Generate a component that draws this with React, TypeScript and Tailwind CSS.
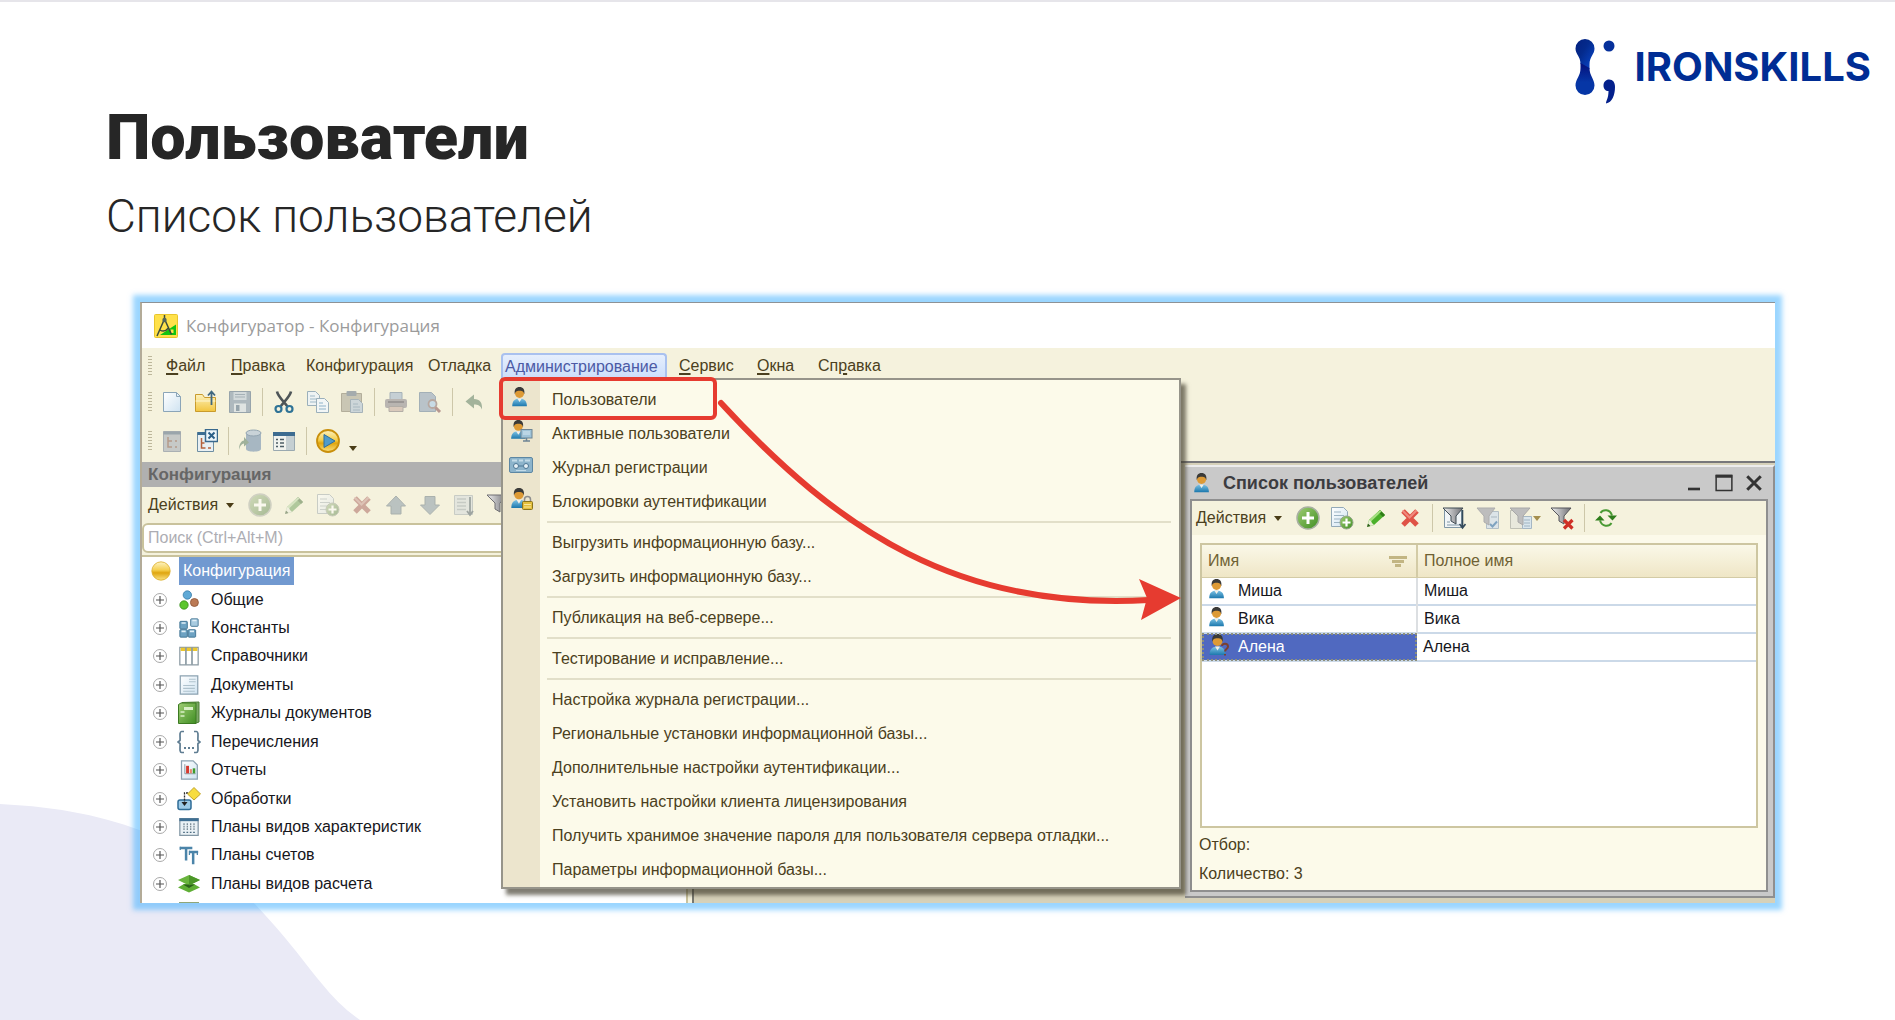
import React from 'react';

type Box = { children: React.ReactNode; size?: string; box?: string };

function Svg({ children, size = 'size-6', box = '0 0 24 24' }: Box) {
  return (
    <svg viewBox={box} className={`${size} shrink-0`} fill="none" aria-hidden="true">
      {children}
    </svg>
  );
}

function Gradients() {
  return (
    <svg className="absolute size-0" aria-hidden="true">
      <defs>
        <linearGradient id="gold" x1="0" y1="0" x2="0" y2="1">
          <stop offset="0" stopColor="#fdf3c4" />
          <stop offset="0.45" stopColor="#f5cf4d" />
          <stop offset="0.6" stopColor="#dfa50f" />
          <stop offset="1" stopColor="#fbe383" />
        </linearGradient>
        <linearGradient id="sheet" x1="0" y1="0" x2="1" y2="1">
          <stop offset="0" stopColor="#ffffff" />
          <stop offset="1" stopColor="#cfe3f1" />
        </linearGradient>
        <linearGradient id="folder" x1="0" y1="0" x2="0" y2="1">
          <stop offset="0" stopColor="#fdf2bd" />
          <stop offset="1" stopColor="#f2c53f" />
        </linearGradient>
        <linearGradient id="leaf" x1="0" y1="0" x2="1" y2="1">
          <stop offset="0" stopColor="#9fce74" />
          <stop offset="1" stopColor="#3f8d22" />
        </linearGradient>
        <linearGradient id="body" x1="0" y1="0" x2="0" y2="1">
          <stop offset="0" stopColor="#7fc4e6" />
          <stop offset="1" stopColor="#1c78ad" />
        </linearGradient>
        <linearGradient id="steel" x1="0" y1="0" x2="1" y2="0">
          <stop offset="0" stopColor="#f2f2f2" />
          <stop offset="1" stopColor="#6d6d72" />
        </linearGradient>
        <linearGradient id="logoTop" x1="0" y1="0" x2="1" y2="1">
          <stop offset="0" stopColor="#04207f" />
          <stop offset="0.4" stopColor="#042a8c" />
          <stop offset="1" stopColor="#0a49cf" />
        </linearGradient>
        <linearGradient id="logoBottom" x1="0" y1="0" x2="0" y2="1">
          <stop offset="0" stopColor="#05107a" />
          <stop offset="0.6" stopColor="#0636a6" />
          <stop offset="1" stopColor="#0636a6" />
        </linearGradient>
      </defs>
    </svg>
  );
}

/* ---------- icons ---------- */

function Person() {
  return (
    <>
      <path d="M3.500 22c0-5.500 2.500-8.500 8-8.500s8 3 8 8.500z" fill="url(#body)" />
      <path d="M9 13.500h5l-2.500 4z" fill="#f4efe6" />
      <circle cx="11.500" cy="8" r="5" fill="#dd9a35" />
      <path d="M6.300 9c-.8-5.500 1.500-8 5.200-8s6 2.500 5.200 8c-.6-2.400-1.400-3.800-5.200-3.800S6.900 6.600 6.300 9z" fill="#3a3a38" />
    </>
  );
}
const UserIcon = ({ size }: { size?: string }) => (
  <Svg size={size}>
    <Person />
  </Svg>
);
const UserUnknownIcon = () => (
  <Svg>
    <Person />
    <path d="M16 13c0-3 6-3 6 .5 0 2.500-3 2.500-3 5M19 21v1.500" stroke="#7a4032" strokeWidth="2" />
  </Svg>
);
const ActiveUserIcon = () => (
  <Svg>
    <g transform="translate(-1 0) scale(.9)">
      <Person />
    </g>
    <rect x="12" y="10.500" width="11" height="8.500" fill="#9fc3d8" stroke="#6d8494" />
    <path d="M14 13h7M14 15h7" stroke="#d7e8f2" />
    <path d="M17.500 19v2.500M14 22h7" stroke="#6d8494" strokeWidth="1.500" />
  </Svg>
);
const LockUserIcon = () => (
  <Svg>
    <g transform="translate(-1 0) scale(.95)">
      <Person />
    </g>
    <path d="M15.500 15v-2.500a3 3 0 0 1 6 0V15" stroke="#8d8d8d" strokeWidth="1.500" />
    <rect x="13.500" y="14.500" width="10" height="8" rx="1" fill="#e3bf3c" stroke="#8a741d" />
    <path d="M15 17.500h7M15 20h7" stroke="#f9e79a" />
  </Svg>
);
const CassetteIcon = () => (
  <Svg>
    <rect x="0.500" y="4.500" width="23" height="15" rx="1.500" fill="#8db4cb" stroke="#5d87a3" />
    <path d="M3 7.500h5M10 7.500h4M16 7.500h5" stroke="#c3dbe8" strokeWidth="2" />
    <circle cx="7" cy="13" r="2.500" fill="#e7f1f6" stroke="#4c7694" />
    <circle cx="17" cy="13" r="2.500" fill="#e7f1f6" stroke="#4c7694" />
    <path d="M10 13h4" stroke="#4c7694" />
    <path d="M7 17.500h10" stroke="#c3dbe8" />
  </Svg>
);
const AppIcon = () => (
  <Svg>
    <rect x="0.500" y="0.500" width="23" height="23" rx="1" fill="#ffe14a" stroke="#e8c52c" />
    <path d="M6 21 22 10.500V21z" fill="#12c312" />
    <path d="M16.500 15.500h3v3.500h-3z" fill="#ffe14a" />
    <path d="M10.500 5 3 22M10.500 5l7 15.500M6 16c3 2 6 1 8.500-2M10.500 1v5" stroke="#3c4b3c" strokeWidth="1.500" />
    <circle cx="10.500" cy="6" r="2.200" fill="#53645a" />
  </Svg>
);
const NewIcon = () => (
  <Svg>
    <path d="M3.500 2.500h13l4 4v15h-17z" fill="url(#sheet)" stroke="#8ba5b8" />
    <path d="M16.500 2.500v4h4" stroke="#8ba5b8" />
  </Svg>
);
const OpenIcon = () => (
  <Svg>
    <path d="M1.500 21.500v-17h7l2 3h11v14z" fill="url(#folder)" stroke="#c99b2c" />
    <path d="M1.500 11h20" stroke="#fdf6d2" />
    <path d="M17.500 15V2M14 5.500 17.500 1.500 21 5.500" stroke="#3f6780" strokeWidth="1.800" />
  </Svg>
);
const SaveIcon = () => (
  <Svg>
    <path d="M1.500 1.500h21v21h-21z" fill="#aeb9be" stroke="#97a4ab" />
    <path d="M5.500 2h13v8h-13z" fill="#d3dadb" />
    <path d="M7 4.500h10M7 7h10" stroke="#a5b1b6" />
    <path d="M6 13.500h12V22H6z" fill="#dfe4e2" />
    <path d="M8 15h3.500v6H8z" fill="#96a4ab" />
  </Svg>
);
const CutIcon = () => (
  <Svg>
    <path d="M5 1.500c1 5 6 9 10.500 15M19 1.500c-1 5-6 9-10.500 15" stroke="#4e5558" strokeWidth="2.600" />
    <circle cx="6.500" cy="19" r="3" stroke="#2f7396" strokeWidth="2.200" />
    <circle cx="17.500" cy="19" r="3" stroke="#2f7396" strokeWidth="2.200" />
  </Svg>
);
const CopyIcon = () => (
  <Svg>
    <path d="M1.500 1.500h8l4 4v10h-12z" fill="#eef3f3" stroke="#9bb0bb" />
    <path d="M4 6h5M4 9h7M4 12h7" stroke="#9fb9c8" />
    <path d="M10.500 8.500h8l4 4v10h-12z" fill="#f2f6f6" stroke="#9bb0bb" />
    <path d="M13 13h4M13 16h7M13 19h7" stroke="#8eb2c9" />
  </Svg>
);
const PasteIcon = () => (
  <Svg>
    <path d="M1.500 3.500h20v18h-20z" fill="#c9c6b4" stroke="#b3ae9b" />
    <rect x="6.500" y="1" width="10" height="5" rx="1" fill="#a4abad" />
    <path d="M10.500 9.500h8l4 4v9h-12z" fill="#cdd6d9" stroke="#a6b3b9" />
    <path d="M13 14h5M13 17h7M13 20h7" stroke="#a8b8c0" />
  </Svg>
);
const PrintIcon = () => (
  <Svg>
    <path d="M6 2.500h12V10H6z" fill="#c5cfd4" stroke="#a6b2b8" />
    <rect x="1" y="9" width="22" height="9" rx="2" fill="#b9b5b1" />
    <path d="M4 12h16" stroke="#9c9896" strokeWidth="2" />
    <path d="M5 16.500h14v5H5z" fill="#d9c9bb" stroke="#b3aea7" />
  </Svg>
);
const PreviewIcon = () => (
  <Svg>
    <path d="M1.500 2.500h12l4 4v15h-16z" fill="#b9c3c9" stroke="#a3b0b7" />
    <circle cx="14.500" cy="14" r="4" fill="#c8dbe5" stroke="#b7a8a0" strokeWidth="1.800" />
    <path d="m17.500 17.500 4.500 4.500" stroke="#b89890" strokeWidth="3" />
  </Svg>
);
const UndoIcon = () => (
  <Svg>
    <path d="M3.500 11.500 12 4.500v4.500c6 0 8.500 3.500 8 10.500-1.500-4-4-5-8-5v4z" fill="#a3b39b" />
  </Svg>
);
const TreeDocIcon = () => (
  <Svg>
    <path d="M3.500 2.500h17v20h-17z" fill="#c6c9c7" stroke="#aab0b3" />
    <path d="M3.500 2.500h17v3h-17z" fill="#9aa5ab" />
    <path d="M8 8v10h4M8 12h4M15 12h2M15 18h2" stroke="#b59b8a" strokeWidth="1.500" />
  </Svg>
);
const TreeCloseIcon = () => (
  <Svg>
    <path d="M3.500 3.500h16v19h-16z" fill="#e9f0f3" stroke="#6e8ea3" />
    <path d="M3.500 3h10v3h-10z" fill="#3c6d92" />
    <path d="M7.500 9v10h4M7.500 14h3M14 19h3" stroke="#b5613c" strokeWidth="1.500" />
    <path d="M11.500.500h12v12h-12z" fill="#eef6fa" stroke="#39698d" strokeWidth="1.500" />
    <path d="m14.500 3.500 6 6M20.500 3.500l-6 6" stroke="#2b5f87" strokeWidth="2" />
  </Svg>
);
const DatabaseIcon = () => (
  <Svg>
    <path d="M8 4v16c0 3.500 15 3.500 15 0V4z" fill="#a7b7c2" />
    <ellipse cx="15.500" cy="4" rx="7.500" ry="3" fill="#c9d3d8" stroke="#93a5b1" />
    <path d="M1 21c0-6 2-9 5-9.500V8l5 5.500-5 4v-3c-2 .5-4 2-5 6.500z" fill="#9fb19b" />
  </Svg>
);
const PropertiesIcon = () => (
  <Svg>
    <path d="M1.500 3.500h21v18h-21z" fill="#f1f3ef" stroke="#9aa9b0" />
    <path d="M1 3h22v4H1z" fill="#3d6c90" />
    <path d="M14 7h8v14h-8z" fill="#c5cfd2" />
    <path d="M4 10.500h2M4 14h2M4 17.500h2M8 10.500h4M8 14h4M8 17.500h4" stroke="#4c5d66" strokeWidth="1.500" />
  </Svg>
);
const PlayIcon = () => (
  <Svg>
    <circle cx="12" cy="12" r="11" fill="url(#gold)" stroke="#c98f0c" strokeWidth="1.800" />
    <path d="M8 5.500 19 12 8 18.500z" fill="#4e9bcb" stroke="#2e6e9b" />
  </Svg>
);
const AddIcon = () => (
  <Svg>
    <circle cx="12" cy="12" r="11" fill="url(#leaf)" stroke="#a9b0a3" strokeWidth="1.500" />
    <path d="M12 6v12M6 12h12" stroke="#fff" strokeWidth="3" />
  </Svg>
);
const PencilIcon = () => (
  <Svg>
    <path d="m3 21 2-7L16 4l5 5-11 10z" fill="#4bb02a" />
    <path d="m14 6 5 5 2-2-5-5z" fill="#2f7c17" />
    <path d="m5 14 11-10 1.500 1.500L7 15.500z" fill="#a6e082" />
    <path d="m3 21 2-7 2 1 1 2 2 2z" fill="#e9efd4" />
    <path d="m3 21 1-3.500 2.500 2.500z" fill="#2c5e18" />
  </Svg>
);
const AddDocIcon = () => (
  <Svg>
    <path d="M1.500 1.500h12l4 4v15h-16z" fill="url(#sheet)" stroke="#93a9b8" />
    <path d="M4 6h7M4 9.500h10M4 13h7M4 16.500h6" stroke="#9db4c4" />
    <circle cx="16.500" cy="16.500" r="6.500" fill="url(#leaf)" stroke="#93a58a" />
    <path d="M16.500 12.500v8M12.500 16.500h8" stroke="#fff" strokeWidth="2.200" />
  </Svg>
);
const DeleteIcon = () => (
  <Svg>
    <path d="m5 5 14 14M19 5 5 19" stroke="#df5347" strokeWidth="5" />
    <path d="m4.500 4.500 7 7 7-7" stroke="#f08a7e" strokeWidth="2" />
  </Svg>
);
const UpIcon = () => (
  <Svg>
    <path d="M12 3 21.500 13H17v8H7v-8H2.500z" fill="#6f96b8" stroke="#54748e" />
  </Svg>
);
const DownIcon = () => (
  <Svg>
    <path d="M12 21.500 21.500 12H17V3.500H7V12H2.500z" fill="#6f96b8" stroke="#54748e" />
  </Svg>
);
const SortListIcon = () => (
  <Svg>
    <path d="M2.500 2.500h18v19h-18z" fill="#cddbe4" stroke="#93a9b8" />
    <path d="M5 6h9M5 9.500h9M5 13h9M5 16.500h9" stroke="#8ea6b6" strokeWidth="1.500" />
    <path d="M18 4v17M15 18l3 4 3-4" stroke="#3b5c74" strokeWidth="1.800" />
  </Svg>
);
const Funnel = () => <path d="M1 2h20l-7 8v9l-5-3v-6z" fill="url(#steel)" stroke="#6e6e72" />;
const FunnelIcon = () => (
  <Svg>
    <Funnel />
  </Svg>
);
const FilterSortIcon = () => (
  <Svg>
    <path d="M2.500 3.500h17v18h-17z" fill="#f1f5f7" stroke="#8097a6" />
    <path d="M5 16h3M5 19h12" stroke="#8097a6" />
    <path d="M1 2h20l-7 8v8l-5-3v-5z" fill="url(#steel)" stroke="#3f4a52" />
    <path d="M20.500 4v17M17.500 18l3 4 3-4" stroke="#33495a" strokeWidth="1.600" />
  </Svg>
);
const FilterPickIcon = () => (
  <Svg>
    <path d="M10.500 5.500h12v17h-12z" fill="#dce4e8" stroke="#b3bfc6" />
    <path d="M15 11h6" stroke="#a9b7bf" />
    <path d="m14 18 2.500 2.500 4.500-5" stroke="#7fa3c0" strokeWidth="2" />
    <path d="M1 2h18l-6 8v9l-5-3v-6z" fill="#bdbdbd" stroke="#adadad" />
  </Svg>
);
const FilterListIcon = () => (
  <Svg>
    <path d="M1.500 4.500h12v18h-12z" fill="#e8e8dc" stroke="#bfc0b5" />
    <path d="M13.500 10.500h9v12h-9z" fill="#d9e5ec" stroke="#a5b7c4" />
    <path d="M15 14h6M15 17h6M15 20h6" stroke="#9fb4c2" />
    <path d="M1 2h20l-7 8v9l-5-3v-6z" fill="#bdbdbd" stroke="#a8a8a8" />
  </Svg>
);
const FilterOffIcon = () => (
  <Svg>
    <path d="M1 2h20l-7 8v8l-5-3v-5z" fill="url(#steel)" stroke="#55555a" />
    <path d="m14 14 8.500 8.500M22.500 14 14 22.500" stroke="#cf2f25" strokeWidth="3.200" />
  </Svg>
);
const RefreshIcon = () => (
  <Svg>
    <path d="M6.500 7C9 3 16 3 18 9.500M17.500 17C15 21 8 21 6 14.500" stroke="#4a9a34" strokeWidth="2" />
    <path d="m13.500 9.500h9.500l-4.500 5zM1 14.500h9.500L6 9.500z" fill="#2f7d1c" />
  </Svg>
);
const PlusIcon = () => (
  <Svg size="size-4" box="0 0 16 16">
    <circle cx="8" cy="8" r="6.500" stroke="#a9a9a9" />
    <path d="M8 4v8M4 8h8" stroke="#555" strokeWidth="1.200" />
  </Svg>
);
const BallIcon = () => (
  <Svg size="size-5">
    <circle cx="12" cy="12" r="11" fill="url(#gold)" stroke="#dcae2c" />
  </Svg>
);
const CommonIcon = () => (
  <Svg size="size-5">
    <circle cx="10" cy="6" r="5" fill="#5fa9d6" stroke="#3c7fab" />
    <circle cx="6" cy="18" r="5" fill="#5cc62f" stroke="#38901a" />
    <circle cx="18.500" cy="15" r="4.800" fill="#bb7a55" stroke="#8e5536" />
  </Svg>
);
const ConstIcon = () => (
  <Svg size="size-5">
    <g fill="#6da2c2" stroke="#356a8c">
      <rect x="1" y="4" width="9" height="9" rx="1" />
      <rect x="1" y="14" width="9" height="9" rx="1" />
      <rect x="11" y="14" width="9" height="9" rx="1" />
      <rect x="14" y="1" width="9" height="9" rx="1" fill="#a8cbe0" />
    </g>
    <path d="M3 6h5M3 16h5M13 16h5M16 3h5" stroke="#e0eff7" strokeWidth="2" />
  </Svg>
);
const CatalogIcon = () => (
  <Svg size="size-5">
    <path d="M1 1.500h22v21H1z" fill="#fff" stroke="#8b9aa3" strokeWidth="1.500" />
    <path d="M2 2h20v4H2z" fill="#ecc72f" />
    <path d="M8.300 1.500v21M15.600 1.500v21" stroke="#8b9aa3" strokeWidth="2" />
  </Svg>
);
const DocIcon = () => (
  <Svg size="size-5">
    <path d="M1.500 1h21v22h-21z" fill="url(#sheet)" stroke="#8ca2b1" strokeWidth="1.500" />
    <path d="M12 5h8M12 8h8M5 12.500h14M5 16h14M5 19.500h14" stroke="#afc2cd" strokeWidth="1.300" />
  </Svg>
);
const JournalIcon = () => (
  <Svg size="size-6">
    <path d="M5 1.500 22 1v20l-4 1.500z" fill="#7aa764" stroke="#4d7f37" />
    <path d="M1.500 3.500 4 2h15v20.500H1.500z" fill="url(#leaf)" stroke="#3c7a22" />
    <path d="M7 6h9v3H7z" fill="#d9efc8" />
    <path d="M3.500 11h4M3.500 15h4" stroke="#d9efc8" strokeWidth="1.500" />
  </Svg>
);
const EnumIcon = () => (
  <Svg size="size-6">
    <path d="M7 1.500H4.500C2 1.500 3.500 8 3 10.500L1 12l2 1.500c.5 2.500-1 9 1.500 9H7M17 1.500h2.500c2.500 0 1 6.500 1.500 9l2 1.500-2 1.500c-.5 2.500 1 9-1.500 9H17" stroke="#5f7d92" strokeWidth="1.700" />
    <path d="M7 18h2M11 18h2M15 18h2" stroke="#5f7d92" strokeWidth="2" />
  </Svg>
);
const ReportIcon = () => (
  <Svg size="size-5">
    <path d="M3 1h14l5 5v17H3z" fill="url(#sheet)" stroke="#8ca2b1" strokeWidth="1.500" />
    <path d="M7 5v11.500h13" stroke="#7b8b95" />
    <path d="M8.500 7h3.500v9H8.500z" fill="#d63a2f" />
    <path d="M13 11h2.500v5H13z" fill="#e8856f" />
    <path d="M16.500 10h3v6h-3z" fill="#3f9a2c" />
  </Svg>
);
const ProcessIcon = () => (
  <Svg size="size-6">
    <rect x="1" y="13" width="13" height="9.500" rx="2" fill="#9dcbe8" stroke="#2f6c96" strokeWidth="1.500" />
    <path d="M14 6H7.500v11" stroke="#2b2b2b" strokeDasharray="2 1" strokeWidth="1.300" />
    <path d="m4.500 15 3 4 3-4z" fill="#222" />
    <path d="M17 0.500 23.500 7 17 13 10.500 7z" fill="#f7dc3f" stroke="#c0a32b" />
  </Svg>
);
const CharPlanIcon = () => (
  <Svg size="size-5">
    <path d="M1 2h22v20H1z" fill="#eaf1f5" stroke="#8196a4" strokeWidth="1.500" />
    <path d="M0.500 1.500h23V5H.500z" fill="#3f6f93" />
    <path d="M6 7.500v8M10 7.500v8M14 7.500v8M18 7.500v8" stroke="#7d8d98" strokeDasharray="2 1" strokeWidth="1.600" />
    <path d="M5 18.500h14" stroke="#4b6a80" strokeDasharray="2 2" strokeWidth="1.600" />
  </Svg>
);
const AccountsIcon = () => (
  <Svg size="size-5">
    <path d="M1 3.500h15M8.500 3.500v15M12 8.500h11M17 8.500V23" stroke="#4b84a9" strokeWidth="3" />
    <path d="M1.500 2v4M12.500 7v5M22 8v4" stroke="#4b84a9" strokeWidth="1.500" />
  </Svg>
);
const CalcPlanIcon = () => (
  <Svg size="size-6">
    <path d="M1 15.500 7 12h10l6 3.500-11 5z" fill="#5fae35" />
    <path d="M1 8 12 3l11 5-11 5.500z" fill="#69b43d" />
    <path d="M6 12.500h12l-6 3.500z" fill="#2c611b" />
    <path d="M12 3 23 8l-11 5.500z" fill="#4b9628" />
  </Svg>
);
const SortMark = () => (
  <Svg size="size-5" box="0 0 20 20">
    <path d="M1 5h18v3H1zM4 9h12v3H4zM7 13h6v3H7z" fill="#c2b583" />
  </Svg>
);

function Caret({ tone = '#4a3d17' }: { tone?: string }) {
  return (
    <svg viewBox="0 0 8 5" className="w-2 shrink-0" aria-hidden="true">
      <path d="M0 0h8L4 5z" fill={tone} />
    </svg>
  );
}

/* ---------- small pieces ---------- */

function Tool({ label, children, dim = false }: { label: string; children: React.ReactNode; dim?: boolean }) {
  return (
    <button aria-label={label} className={`flex h-9 w-[34px] shrink-0 items-center justify-center ${dim ? 'opacity-50 saturate-50' : ''}`}>
      {children}
    </button>
  );
}
const Separator = () => (
  <span className="flex w-2.5 shrink-0 justify-center">
    <span className="h-7 w-px bg-[#cdc7a9]" />
  </span>
);
const Grip = () => (
  <span className="h-5 w-1 shrink-0 bg-[repeating-linear-gradient(to_bottom,#bdb79b_0_1px,transparent_1px_3px)]" />
);

const mainMenu: { pre?: string; key?: string; rest: string; width: string; open?: boolean }[] = [
  { key: 'Ф', rest: 'айл', width: 'w-[65px]' },
  { key: 'П', rest: 'равка', width: 'w-[75px]' },
  { rest: 'Конфигурация', width: 'w-[122px]' },
  { rest: 'Отладка', width: 'w-[73px]' },
  { rest: 'Администрирование', width: 'w-[178px]', open: true },
  { key: 'С', rest: 'ервис', width: 'w-[78px]' },
  { key: 'О', rest: 'кна', width: 'w-[61px]' },
  { pre: 'Сп', key: 'р', rest: 'авка', width: 'w-[75px]' },
];

const adminMenu: { label: string; icon?: React.ReactNode }[][] = [
  [
    { label: 'Пользователи', icon: <UserIcon size="size-[22px]" /> },
    { label: 'Активные пользователи', icon: <ActiveUserIcon /> },
    { label: 'Журнал регистрации', icon: <CassetteIcon /> },
    { label: 'Блокировки аутентификации', icon: <LockUserIcon /> },
  ],
  [{ label: 'Выгрузить информационную базу...' }, { label: 'Загрузить информационную базу...' }],
  [{ label: 'Публикация на веб-сервере...' }],
  [{ label: 'Тестирование и исправление...' }],
  [
    { label: 'Настройка журнала регистрации...' },
    { label: 'Региональные установки информационной базы...' },
    { label: 'Дополнительные настройки аутентификации...' },
    { label: 'Установить настройки клиента лицензирования' },
    { label: 'Получить хранимое значение пароля для пользователя сервера отладки...' },
    { label: 'Параметры информационной базы...' },
  ],
];

const tree: { label: string; icon: React.ReactNode }[] = [
  { label: 'Общие', icon: <CommonIcon /> },
  { label: 'Константы', icon: <ConstIcon /> },
  { label: 'Справочники', icon: <CatalogIcon /> },
  { label: 'Документы', icon: <DocIcon /> },
  { label: 'Журналы документов', icon: <JournalIcon /> },
  { label: 'Перечисления', icon: <EnumIcon /> },
  { label: 'Отчеты', icon: <ReportIcon /> },
  { label: 'Обработки', icon: <ProcessIcon /> },
  { label: 'Планы видов характеристик', icon: <CharPlanIcon /> },
  { label: 'Планы счетов', icon: <AccountsIcon /> },
  { label: 'Планы видов расчета', icon: <CalcPlanIcon /> },
];

const users = [
  { name: 'Миша', full: 'Миша' },
  { name: 'Вика', full: 'Вика' },
  { name: 'Алена', full: 'Алена', selected: true },
];

/* ---------- sections ---------- */

function Logo() {
  return (
    <div className="flex items-center gap-5">
      <svg viewBox="0 0 40 66" className="h-[66px] w-10" aria-hidden="true">
        <path d="M10 1a9.500 9.500 0 0 1 9.500 9.500c0 6-5 8-5 16L14.500 31 5.500 26c0-8-5-9.500-5-15.500A9.500 9.500 0 0 1 10 1z" fill="url(#logoTop)" />
        <path d="M5.500 25 14.500 30c0 8 5 11 5 17.500a9.500 9.500 0 0 1-19 0c0-6.500 5-9 5-17.500z" fill="url(#logoBottom)" />
        <circle cx="34" cy="8" r="5.500" fill="#06309b" />
        <path d="M34 41.500c4 0 6 3 6 7.500 0 8-3 15.500-9 16.500 0-3 2.500-5 2.500-12.500-3 0-5-2-5-5.500s2.500-6 5.500-6z" fill="#04208c" />
      </svg>
      <span className="pb-2 font-['Inter'] text-[40px] leading-none font-bold text-[#002d94]">IRONSKILLS</span>
    </div>
  );
}

function AdminMenu() {
  return (
    <div className="absolute top-[25px] left-0 z-10 w-[680px] border-2 border-[#96948a] bg-[#fcfaea] shadow-[5px_6px_4px_rgba(60,56,40,0.65)]">
      <div className="bg-[linear-gradient(to_right,#ece5cd_37px,transparent_37px)] pt-[3px]">
        {adminMenu.map((group, g) => (
          <ul key={g}>
            {g > 0 && <li className="mr-2 ml-11 flex h-[7px] items-center" aria-hidden="true"><span className="h-0.5 w-full bg-[#e2dfc9]" /></li>}
            {group.map((item) => (
              <li key={item.label}>
                <button className="flex h-[34px] w-full items-center text-left text-base whitespace-nowrap text-[#4b4020]">
                  <span className="flex w-[49px] pb-1.5 pl-1.5">{item.icon}</span>
                  {item.label}
                </button>
              </li>
            ))}
          </ul>
        ))}
      </div>
      <div className="absolute -top-[3px] -left-1 h-[43px] w-[218px] rounded-md border-4 border-[#e63b30]" />
      <svg viewBox="0 0 466 224" className="absolute top-[18px] left-[212px] h-[224px] w-[466px]" fill="none" aria-hidden="true">
        <path d="M6 5C124 133 244 213 434 202" stroke="#e63b30" strokeWidth="6" strokeLinecap="round" />
        <path d="m424 181 42 19-40 22 6-22z" fill="#e63b30" />
      </svg>
    </div>
  );
}

function ConfigPanel() {
  return (
    <aside className="flex w-[544px] shrink-0 flex-col">
      <h2 className="mt-px flex h-[25px] items-center bg-[#b0b0b0] pl-1.5 text-[17px] font-bold text-[#666]">Конфигурация</h2>
      <div className="flex h-9 items-center pl-1.5 text-base text-[#4b4020]">
        <button className="flex w-[95px] items-center gap-2">Действия <Caret /></button>
        <Tool label="Добавить" dim><AddIcon /></Tool>
        <Tool label="Изменить" dim><PencilIcon /></Tool>
        <Tool label="Скопировать" dim><AddDocIcon /></Tool>
        <Tool label="Удалить" dim><DeleteIcon /></Tool>
        <Tool label="Вверх" dim><UpIcon /></Tool>
        <Tool label="Вниз" dim><DownIcon /></Tool>
        <Tool label="Порядок" dim><SortListIcon /></Tool>
        <Tool label="Отбор"><FunnelIcon /></Tool>
      </div>
      <input
        aria-label="Поиск"
        placeholder="Поиск (Ctrl+Alt+M)"
        className="h-[30px] w-full rounded-md border-2 border-[#c9c29c] bg-white px-1 text-base placeholder:text-[#adadb3]"
      />
      <div className="mt-0.5 flex-1 overflow-hidden border-t-2 border-[#c9c29c] bg-white">
        <ul className="grid h-[341px] grid-rows-12 text-base text-[#16161c]">
          <li className="flex items-center pl-[9px]">
            <BallIcon />
            <button className="ml-2 h-7 bg-[#7199d0] px-1 text-white">Конфигурация</button>
          </li>
          {tree.map((n) => (
            <li key={n.label} className="flex items-center pl-2.5">
              <button aria-label={`Развернуть: ${n.label}`} className="shrink-0"><PlusIcon /></button>
              <span className="ml-[9px] flex w-6 justify-center">{n.icon}</span>
              <button className="ml-2.5 whitespace-nowrap">{n.label}</button>
            </li>
          ))}
        </ul>
        <div className="mt-1 ml-[37px] h-5 w-5 border-2 border-[#8fa678] bg-[#cfe3a8]" />
      </div>
    </aside>
  );
}

function UserWindow() {
  return (
    <section className="mt-0.5 mb-[5px] flex w-[590px] flex-col border-t-2 border-r-2 border-b-2 border-t-[#ececec] border-r-[#8f8f8f] border-b-[#8f8f8f] bg-[#c9c9c9]">
      <header className="flex h-8 items-center pl-1.5">
        <UserIcon size="size-[22px]" />
        <h2 className="ml-2.5 flex-1 text-[18px] font-bold text-[#3c3c40]">Список пользователей</h2>
        <div className="flex items-center gap-3 pr-2.5">
          <button aria-label="Свернуть"><Svg size="size-[18px]"><path d="M4 20h16" stroke="#333" strokeWidth="3.500" /></Svg></button>
          <button aria-label="Развернуть"><Svg size="size-[18px]"><path d="M1.500 2h21v20h-21z" stroke="#333" strokeWidth="2" /><path d="M1 3h22" stroke="#333" strokeWidth="4" /></Svg></button>
          <button aria-label="Закрыть"><Svg size="size-[18px]"><path d="m3 3 18 18M21 3 3 21" stroke="#333" strokeWidth="4" /></Svg></button>
        </div>
      </header>
      <div className="mx-[5px] mb-1 flex flex-1 flex-col border-2 border-[#8f8f8f] bg-[#fcfaea] text-base text-[#4b4020]">
        <div className="flex h-[34px] items-center bg-[#f5f2dd] pl-1">
          <button className="flex w-[95px] items-center gap-2">Действия <Caret /></button>
          <Tool label="Добавить"><AddIcon /></Tool>
          <Tool label="Скопировать"><AddDocIcon /></Tool>
          <Tool label="Изменить"><PencilIcon /></Tool>
          <Tool label="Удалить"><DeleteIcon /></Tool>
          <Separator />
          <Tool label="Отбор и сортировка"><FilterSortIcon /></Tool>
          <Tool label="Отбор по значению"><FilterPickIcon /></Tool>
          <button aria-label="История отборов" className="mr-1 flex h-9 shrink-0 items-center pl-1">
            <FilterListIcon />
            <Caret tone="#a58f4e" />
          </button>
          <Tool label="Отключить отбор"><FilterOffIcon /></Tool>
          <Separator />
          <Tool label="Обновить"><RefreshIcon /></Tool>
        </div>
        <div className="mx-2 mt-2 h-[285px] border-2 border-[#cdc6a1] bg-white">
          <table className="w-full table-fixed border-collapse">
            <thead>
              <tr className="h-8 bg-linear-to-b from-[#faf8e8] to-[#efe6c6] text-left text-[#6f6133]">
                <th className="w-[215px] border-r-2 border-b border-[#d3cba6] p-0 font-normal">
                  <button className="flex w-full items-center justify-between pr-2 pl-1.5">Имя <SortMark /></button>
                </th>
                <th className="border-b border-[#d3cba6] p-0 pl-1.5 font-normal">Полное имя</th>
              </tr>
            </thead>
            <tbody className="text-[#16161c]">
              {users.map((u) => (
                <tr key={u.name} className="h-7 border-b-2 border-[#cbd9e8]">
                  <td className={u.selected ? 'bg-[#5069c0] p-0 text-white outline-2 -outline-offset-2 outline-dotted outline-[#8d8f7c]' : 'border-r-2 border-[#dcdfe2] p-0'}>
                    <span className="flex h-[26px] items-center gap-2 pl-1">
                      <span className="flex w-6 pb-1">{u.selected ? <UserUnknownIcon /> : <UserIcon size="size-[22px]" />}</span>
                      {u.name}
                    </span>
                  </td>
                  <td className="p-0 pl-1.5">{u.full}</td>
                </tr>
              ))}
            </tbody>
          </table>
        </div>
        <p className="mt-0.5 ml-[7px] leading-[29px]">Отбор:</p>
        <p className="ml-[7px] leading-[29px]">Количество: 3</p>
      </div>
    </section>
  );
}

export default function App() {
  return (
    <main className="relative min-h-screen overflow-hidden border-t-2 border-[#e6e5ea] bg-white font-['Liberation_Sans',sans-serif]">
      <Gradients />
      <svg viewBox="0 0 360 218" className="absolute bottom-0 left-0 h-[218px] w-[360px]" aria-hidden="true">
        <path d="M0 2C60 5 105 14 150 32c66 26 96 58 136 105 30 36 44 60 74 81H0z" fill="#eaeaf6" />
      </svg>
      <header className="relative flex items-start justify-between pt-9 pr-6 pl-[106px]">
        <div className="pt-[68px] font-['Roboto'] text-[#262626]">
          <h1 className="text-[63px] leading-[64px] font-black">Пользователи</h1>
          <p className="mt-3.5 text-[46px] leading-[64px] font-light">Список пользователей</p>
        </div>
        <Logo />
      </header>

      <div className="relative mt-[54px] mr-[120px] ml-[140px] border-t border-l-2 border-t-[#8d9296] border-l-[#b3ab98] bg-[#f5f2dd] shadow-[0_0_5px_7px_rgba(55,174,255,0.5)]">
        <div className="flex h-[45px] items-center gap-2 bg-white pl-3 font-['Open_Sans'] text-[17px] text-[#9b9b9b]">
          <AppIcon />
          Конфигуратор - Конфигурация
        </div>
        <nav className="flex h-9 items-center pl-1.5 text-base text-[#4b4020]">
          <Grip />
          <div className="ml-3.5 flex">
            {mainMenu.map((m) => (
              <div key={m.rest} className={`relative shrink-0 ${m.width}`}>
                <button
                  className={
                    m.open
                      ? 'h-[27px] w-[166px] rounded-t-sm border-2 border-b-0 border-[#a9c1ef] bg-linear-to-b from-[#e6effd] to-[#c9dcfb] px-0.5 text-left text-[#4c5aa5]'
                      : 'h-[27px] w-full text-left'
                  }
                >
                  {m.pre}
                  {m.key && <span className="underline decoration-2 underline-offset-2">{m.key}</span>}
                  {m.rest}
                </button>
                {m.open && <AdminMenu />}
              </div>
            ))}
          </div>
        </nav>
        <div className="flex h-9 items-center pl-1.5">
          <Grip />
          <span className="w-[3px]" />
          <Tool label="Новый"><NewIcon /></Tool>
          <Tool label="Открыть"><OpenIcon /></Tool>
          <Tool label="Сохранить"><SaveIcon /></Tool>
          <Separator />
          <Tool label="Вырезать"><CutIcon /></Tool>
          <Tool label="Копировать"><CopyIcon /></Tool>
          <Tool label="Вставить"><PasteIcon /></Tool>
          <Separator />
          <Tool label="Печать"><PrintIcon /></Tool>
          <Tool label="Просмотр"><PreviewIcon /></Tool>
          <Separator />
          <Tool label="Отменить"><UndoIcon /></Tool>
        </div>
        <div className="flex h-[41px] items-center pl-1.5">
          <Grip />
          <span className="w-[3px]" />
          <Tool label="Конфигурация"><TreeDocIcon /></Tool>
          <Tool label="Закрыть конфигурацию"><TreeCloseIcon /></Tool>
          <Separator />
          <Tool label="Обновить базу данных"><DatabaseIcon /></Tool>
          <Tool label="Свойства"><PropertiesIcon /></Tool>
          <Separator />
          <Tool label="Запуск"><PlayIcon /></Tool>
          <button aria-label="Параметры запуска" className="ml-1 pt-4"><Caret /></button>
        </div>
        <div className="flex h-[442px]">
          <ConfigPanel />
          <div className="w-2 shrink-0 border-x-2 border-r-[#77776f] border-l-[#c9c29c] bg-[#f5f2dd]" />
          <div className="flex flex-1 justify-end border-t-2 border-[#77777a] bg-[#d6d1b9]">
            <UserWindow />
          </div>
        </div>
      </div>
    </main>
  );
}
